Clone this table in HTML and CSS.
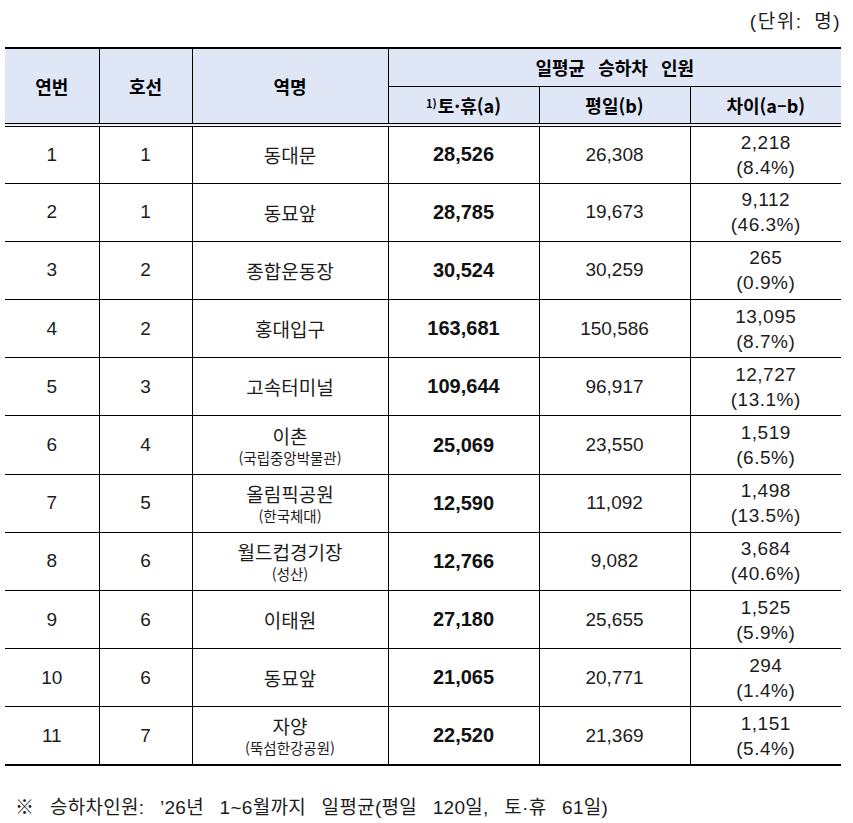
FILE: index.html
```html
<!DOCTYPE html>
<html lang="ko">
<head>
<meta charset="utf-8">
<title>역별 일평균 승하차 인원</title>
<link rel="stylesheet" href="styles.css">
</head>
<body>
<div class="page">
  <div class="unit">(단위: 명)</div>
  <table class="stats">
    <colgroup>
      <col class="c-no"><col class="c-line"><col class="c-name"><col class="c-num"><col class="c-num"><col class="c-num">
    </colgroup>
    <thead>
      <tr class="h1">
        <th rowspan="2">연번</th>
        <th rowspan="2">호선</th>
        <th rowspan="2">역명</th>
        <th colspan="3" class="wide">일평균 승하차 인원</th>
      </tr>
      <tr class="h2">
        <th><sup>1)</sup>토·휴(a)</th>
        <th>평일(b)</th>
        <th>차이(a–b)</th>
      </tr>
    </thead>
    <tbody>
      <tr><td class="n">1</td><td class="n">1</td><td class="st"><span class="main">동대문</span></td><td class="b">28,526</td><td class="n">26,308</td><td class="n diff"><span>2,218</span><span>(8.4%)</span></td></tr>
      <tr><td class="n">2</td><td class="n">1</td><td class="st"><span class="main">동묘앞</span></td><td class="b">28,785</td><td class="n">19,673</td><td class="n diff"><span>9,112</span><span>(46.3%)</span></td></tr>
      <tr><td class="n">3</td><td class="n">2</td><td class="st"><span class="main">종합운동장</span></td><td class="b">30,524</td><td class="n">30,259</td><td class="n diff"><span>265</span><span>(0.9%)</span></td></tr>
      <tr><td class="n">4</td><td class="n">2</td><td class="st"><span class="main">홍대입구</span></td><td class="b">163,681</td><td class="n">150,586</td><td class="n diff"><span>13,095</span><span>(8.7%)</span></td></tr>
      <tr><td class="n">5</td><td class="n">3</td><td class="st"><span class="main">고속터미널</span></td><td class="b">109,644</td><td class="n">96,917</td><td class="n diff"><span>12,727</span><span>(13.1%)</span></td></tr>
      <tr><td class="n">6</td><td class="n">4</td><td class="st"><span class="main">이촌</span><span class="sub">(국립중앙박물관)</span></td><td class="b">25,069</td><td class="n">23,550</td><td class="n diff"><span>1,519</span><span>(6.5%)</span></td></tr>
      <tr><td class="n">7</td><td class="n">5</td><td class="st"><span class="main">올림픽공원</span><span class="sub">(한국체대)</span></td><td class="b">12,590</td><td class="n">11,092</td><td class="n diff"><span>1,498</span><span>(13.5%)</span></td></tr>
      <tr><td class="n">8</td><td class="n">6</td><td class="st"><span class="main">월드컵경기장</span><span class="sub">(성산)</span></td><td class="b">12,766</td><td class="n">9,082</td><td class="n diff"><span>3,684</span><span>(40.6%)</span></td></tr>
      <tr><td class="n">9</td><td class="n">6</td><td class="st"><span class="main">이태원</span></td><td class="b">27,180</td><td class="n">25,655</td><td class="n diff"><span>1,525</span><span>(5.9%)</span></td></tr>
      <tr><td class="n">10</td><td class="n">6</td><td class="st"><span class="main">동묘앞</span></td><td class="b">21,065</td><td class="n">20,771</td><td class="n diff"><span>294</span><span>(1.4%)</span></td></tr>
      <tr class="last"><td class="n">11</td><td class="n">7</td><td class="st"><span class="main">자양</span><span class="sub">(뚝섬한강공원)</span></td><td class="b">22,520</td><td class="n">21,369</td><td class="n diff"><span>1,151</span><span>(5.4%)</span></td></tr>
    </tbody>
  </table>
  <p class="note">※ 승하차인원: ’26년 1~6월까지 일평균(평일 120일, 토·휴 61일)</p>
</div>
</body>
</html>
```

FILE: styles.css
```css
html, body {
  margin: 0;
  padding: 0;
  background: #fff;
}

.page {
  padding: 0 12px 0 5px;
  color: #1c1c1c;
  font-family: "Liberation Sans", "Noto Sans CJK KR", sans-serif;
}

.unit {
  height: 47px;
  line-height: 44px;
  text-align: right;
  font-size: 19px;
  letter-spacing: 1.5px;
  word-spacing: 5px;
  padding-right: 0;
}

.stats {
  width: 836px;
  border-collapse: collapse;
  table-layout: fixed;
  border-top: 2px solid #000;
  border-bottom: 2px solid #000;
}

.c-no { width: 94px; }
.c-line { width: 93px; }
.c-name { width: 196px; }
.c-num { width: 151px; }

.stats th,
.stats td {
  padding: 0;
  text-align: center;
  vertical-align: middle;
  border: 1px solid #000;
}

.stats tr > :first-child { border-left: none; }
.stats tr > :last-child { border-right: none; }
.stats .h2 > :first-child { border-left: 1px solid #000; }

.stats th {
  background: #dfe6f6;
  font-family: "Noto Sans CJK KR", sans-serif;
  font-weight: 700;
  font-size: 18px;
  color: #000;
}

.stats .h1 { height: 38px; }
.stats .h2 { height: 39px; }
.stats .h2 th,
.stats .h1 th[rowspan] { border-bottom: 4px double #000; }

.stats th.wide { word-spacing: 8px; }

.stats sup {
  font-size: 11px;
  vertical-align: 5px;
  line-height: 0;
  margin-right: 1px;
}

.stats tbody tr { height: 58.2px; }
.stats tbody tr.last td { border-bottom: 2px solid #000; }

.stats td.n {
  font-size: 19px;
  font-weight: 400;
}

.stats td.b {
  font-size: 20px;
  font-weight: 700;
  color: #111;
}

.stats td.diff span {
  display: block;
  line-height: 25px;
  letter-spacing: 0.5px;
}

.stats td.st span { display: block; }

.stats td.st .main {
  font-family: "Noto Sans CJK KR", sans-serif;
  font-size: 19px;
  line-height: 27px;
}

.stats td.st .sub {
  font-family: "Noto Sans CJK KR", sans-serif;
  font-size: 14.5px;
  line-height: 22px;
  margin-top: -2px;
}

.note {
  margin: 29px 0 0 10px;
  font-size: 19px;
  line-height: 26px;
  word-spacing: 10px;
  letter-spacing: 0.3px;
}
```
